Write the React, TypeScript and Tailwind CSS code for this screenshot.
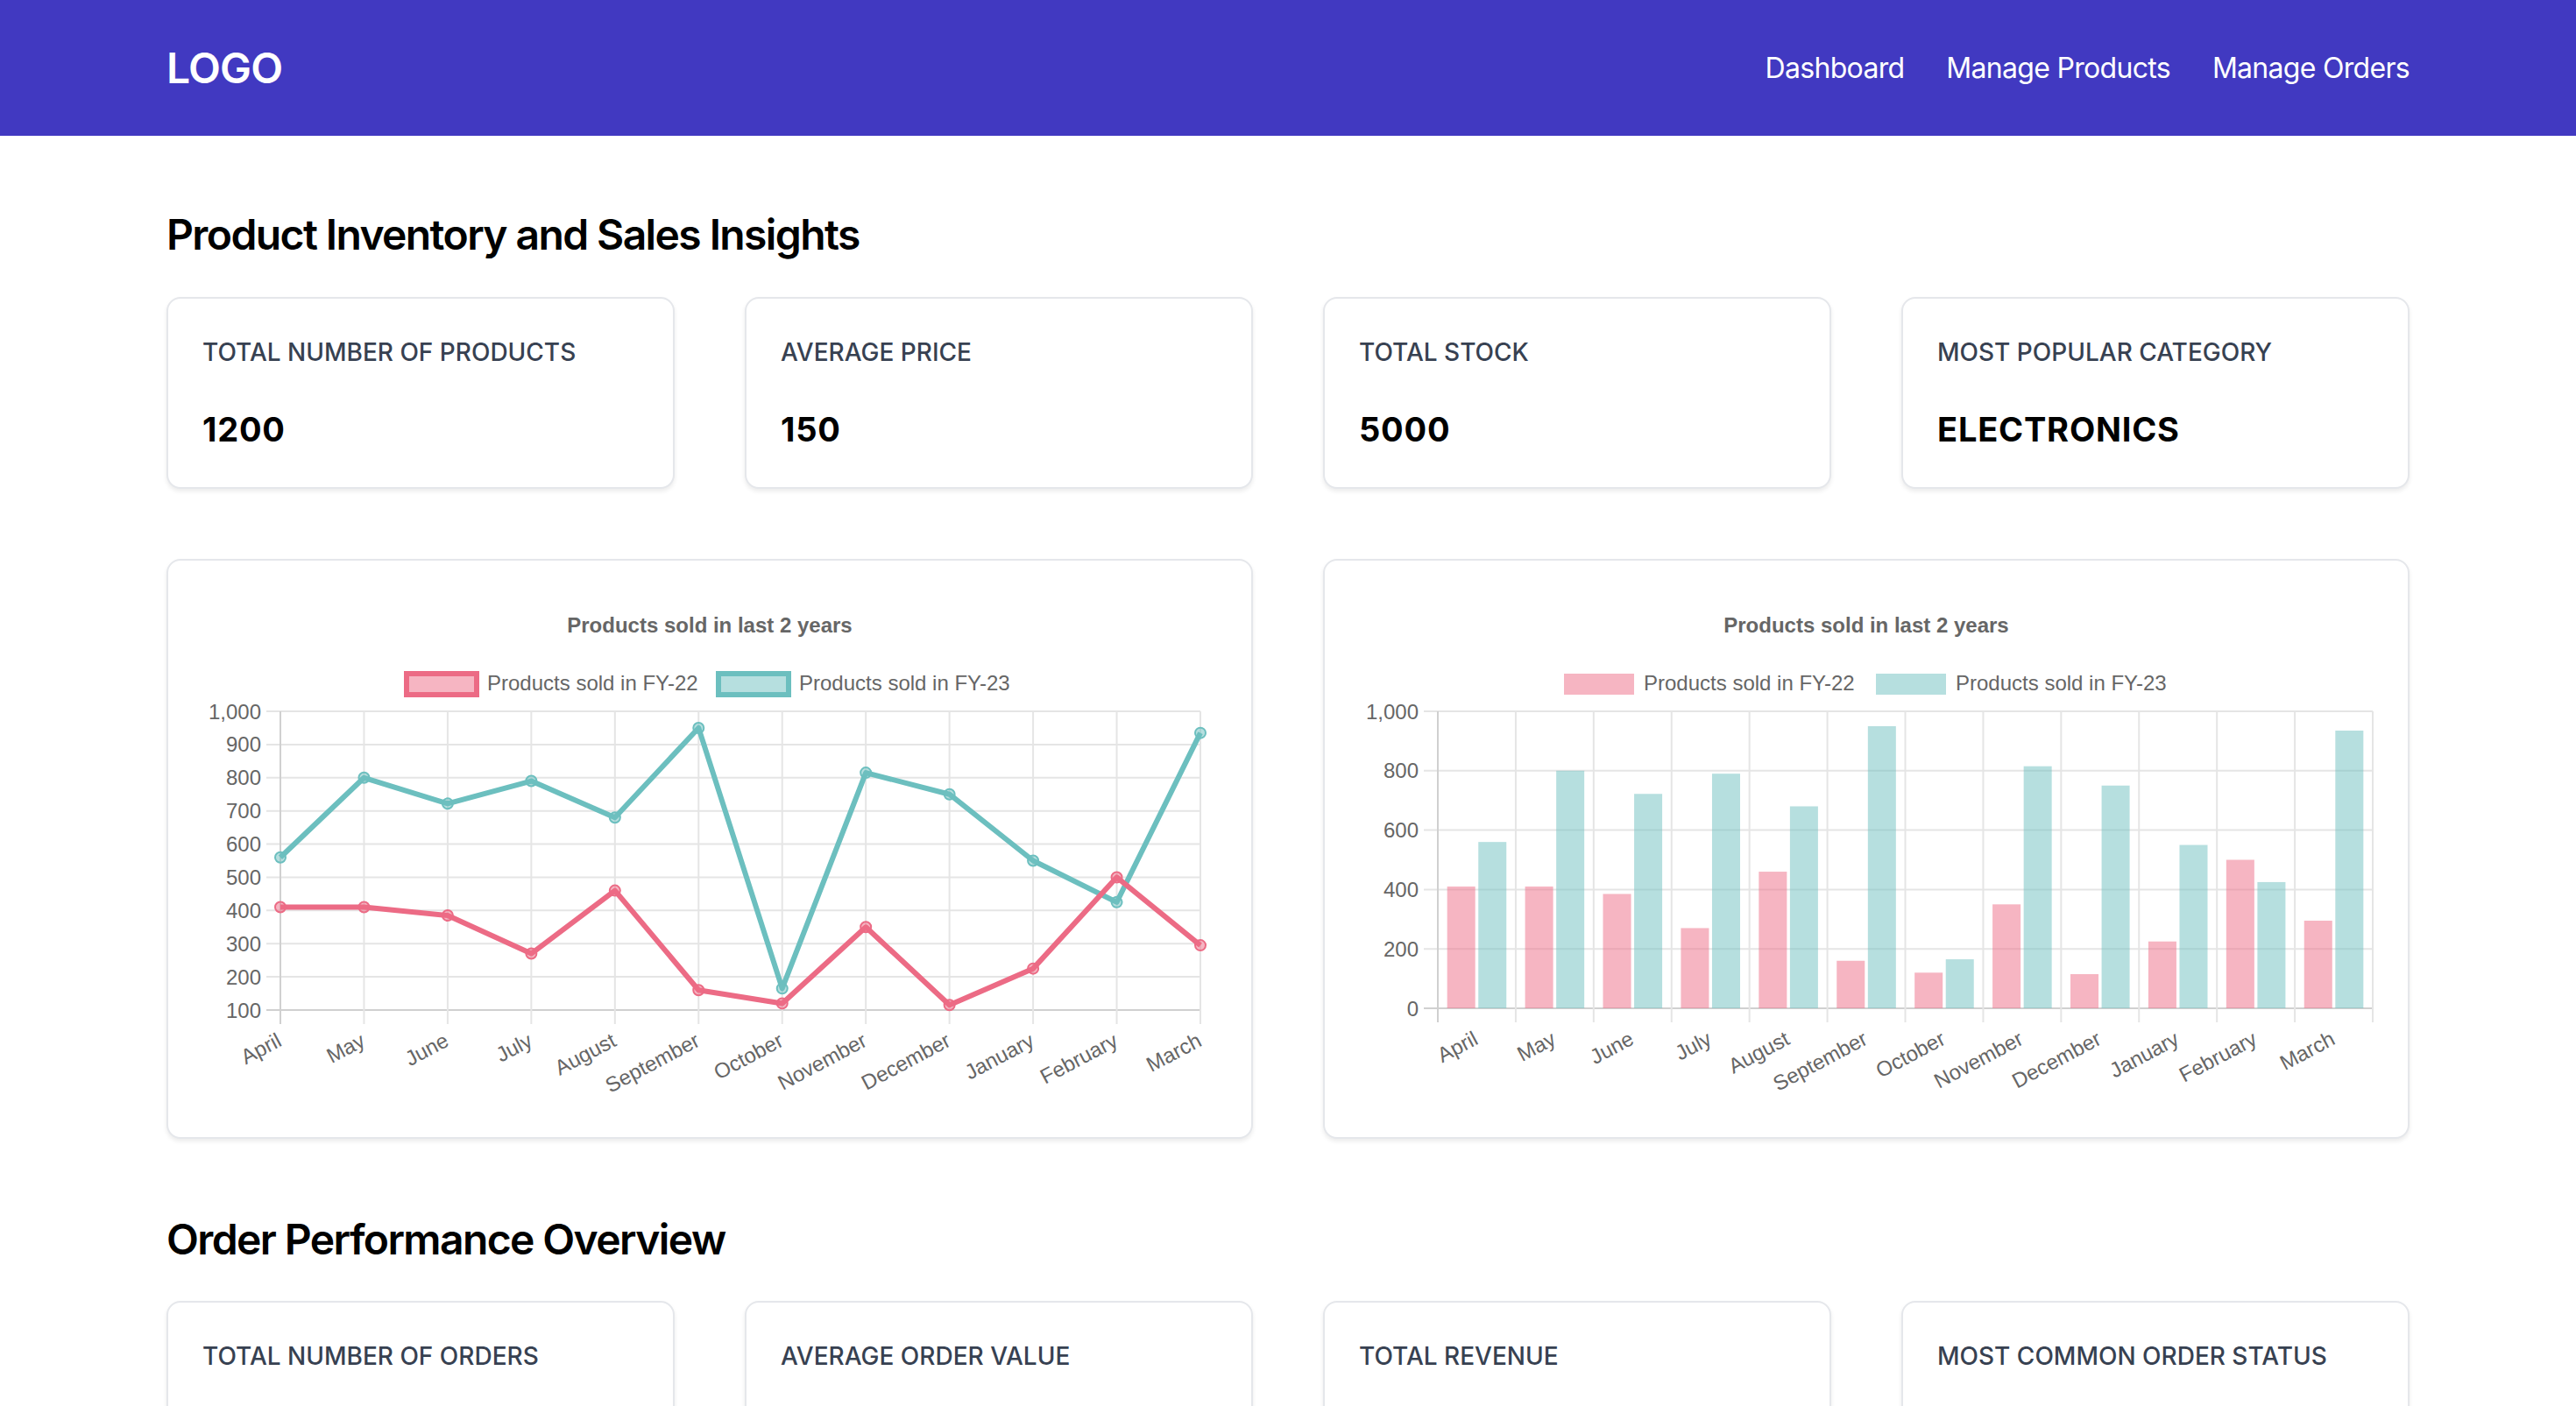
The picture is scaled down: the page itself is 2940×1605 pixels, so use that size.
import React from "react";

const months = ["April","May","June","July","August","September","October","November","December","January","February","March"];
const fy22 = [410, 410, 385, 270, 460, 160, 120, 350, 115, 225, 500, 295];
const fy23 = [560, 800, 722, 790, 680, 950, 165, 815, 750, 550, 425, 935];

const RED = "#ec6b85";
const TEAL = "#6cbfbf";
const RED_FILL = "rgba(237,107,133,0.5)";
const TEAL_FILL = "rgba(109,191,191,0.5)";
const GRID = "#e5e5e5";
const AXIS = "#d0d0d0";
const TXT = "#666666";
const FONT = "'Liberation Sans', Arial, Helvetica, sans-serif";
const ROT = 28;

function Legend({ bordered }: { bordered: boolean }) {
  return (
    <g fontFamily={FONT} fontSize={24} fill={TXT}>
      {bordered ? (
        <>
          <rect x={234} y={91} width={80} height={24} fill={RED_FILL} stroke={RED} strokeWidth={6} />
          <rect x={590} y={91} width={80} height={24} fill={TEAL_FILL} stroke={TEAL} strokeWidth={6} />
        </>
      ) : (
        <>
          <rect x={235} y={91} width={80} height={24} fill={RED_FILL} />
          <rect x={591} y={91} width={80} height={24} fill={TEAL_FILL} />
        </>
      )}
      <text x={326} y={110}>Products sold in FY-22</text>
      <text x={682} y={110}>Products sold in FY-23</text>
    </g>
  );
}

function Title() {
  return (
    <text x={580} y={44} textAnchor="middle" fontFamily={FONT} fontSize={24} fontWeight={700} fill={TXT}>
      Products sold in last 2 years
    </text>
  );
}

function LineChart() {
  const L = 90, R = 1140, T = 134, B = 475;
  const xs = (i: number) => L + (i * (R - L)) / 11;
  const ys = (v: number) => B - ((v - 100) * (B - T)) / 900;
  const ticks = [100, 200, 300, 400, 500, 600, 700, 800, 900, 1000];
  const pts = (d: number[]) => d.map((v, i) => `${xs(i)},${ys(v)}`).join(" ");
  return (
    <svg width={1160} height={582} className="block">
      <Title />
      <Legend bordered />
      {ticks.map((t) => (
        <g key={t}>
          <line x1={L - 16} x2={R} y1={ys(t)} y2={ys(t)} stroke={t === 100 ? AXIS : GRID} strokeWidth={2} />
          <text x={68} y={ys(t) + 8.5} textAnchor="end" fontFamily={FONT} fontSize={24} fill={TXT}>
            {t === 1000 ? "1,000" : t}
          </text>
        </g>
      ))}
      {months.map((m, i) => (
        <g key={m}>
          <line x1={xs(i)} x2={xs(i)} y1={T} y2={B + 16} stroke={i === 0 ? AXIS : GRID} strokeWidth={2} />
          <text
            x={xs(i) + 3}
            y={B + 40}
            textAnchor="end"
            fontFamily={FONT}
            fontSize={24}
            fill={TXT}
            transform={`rotate(-${ROT} ${xs(i) + 3} ${B + 40})`}
          >
            {m}
          </text>
        </g>
      ))}
      <polyline points={pts(fy23)} fill="none" stroke={TEAL} strokeWidth={6} strokeLinejoin="round" />
      {fy23.map((v, i) => (
        <circle key={i} cx={xs(i)} cy={ys(v)} r={6} fill={TEAL_FILL} stroke={TEAL} strokeWidth={2} />
      ))}
      <polyline points={pts(fy22)} fill="none" stroke={RED} strokeWidth={6} strokeLinejoin="round" />
      {fy22.map((v, i) => (
        <circle key={i} cx={xs(i)} cy={ys(v)} r={6} fill={RED_FILL} stroke={RED} strokeWidth={2} />
      ))}
    </svg>
  );
}

function BarChart() {
  const L = 91, R = 1158, T = 134, B = 473;
  const cw = (R - L) / 12;
  const ys = (v: number) => B - (v * (B - T)) / 1000;
  const ticks = [0, 200, 400, 600, 800, 1000];
  const slot = (cw * 0.8) / 2;
  const bw = slot * 0.9;
  return (
    <svg width={1160} height={582} className="block">
      <Title />
      <Legend bordered={false} />
      {ticks.map((t) => (
        <g key={t}>
          <line x1={L - 16} x2={R} y1={ys(t)} y2={ys(t)} stroke={t === 0 ? AXIS : GRID} strokeWidth={2} />
          <text x={69} y={ys(t) + 8.5} textAnchor="end" fontFamily={FONT} fontSize={24} fill={TXT}>
            {t === 1000 ? "1,000" : t}
          </text>
        </g>
      ))}
      {Array.from({ length: 13 }).map((_, i) => (
        <line key={i} x1={L + i * cw} x2={L + i * cw} y1={T} y2={B + 16} stroke={i === 0 ? AXIS : GRID} strokeWidth={2} />
      ))}
      {months.map((m, i) => {
        const c = L + i * cw + cw / 2;
        return (
          <g key={m}>
            <rect x={c - slot + (slot - bw) / 2} y={ys(fy22[i])} width={bw} height={B - ys(fy22[i])} fill={RED_FILL} />
            <rect x={c + (slot - bw) / 2} y={ys(fy23[i])} width={bw} height={B - ys(fy23[i])} fill={TEAL_FILL} />
            <text
              x={c + 3}
              y={B + 40}
              textAnchor="end"
              fontFamily={FONT}
              fontSize={24}
              fill={TXT}
              transform={`rotate(-${ROT} ${c + 3} ${B + 40})`}
            >
              {m}
            </text>
          </g>
        );
      })}
    </svg>
  );
}

function StatCard({ label, value }: { label: string; value: string }) {
  return (
    <div className="rounded-[16px] border-2 border-[#e5e7eb] bg-white p-[38px] shadow-[0_3px_5px_rgba(0,0,0,0.08)]">
      <div className="mt-[3px] pl-[1px] text-[28px] leading-[40px] font-medium uppercase text-[#374151]">{label}</div>
      <div className="mt-[40px] pl-[1px] text-[38px] leading-[56px] font-bold tracking-[0.8px] text-black">{value}</div>
    </div>
  );
}

export default function App() {
  return (
    <div className="min-h-screen bg-white" style={{ fontFamily: "Inter, 'Noto Sans', sans-serif" }}>
      <header className="h-[155px] bg-[#4139c1]">
        <div className="mx-auto flex h-full max-w-[2560px] items-center justify-between">
          <div className="text-[48px] font-semibold tracking-[-0.8px] text-white">LOGO</div>
          <nav className="flex items-center gap-[48px] text-[32px] tracking-[-0.7px] text-white">
            <a>Dashboard</a>
            <a>Manage Products</a>
            <a>Manage Orders</a>
          </nav>
        </div>
      </header>
      <main className="mx-auto max-w-[2560px] pt-[81px] pb-[80px]">
        <h1 className="text-[48px] leading-[64px] font-semibold tracking-[-1.6px] text-black">Product Inventory and Sales Insights</h1>
        <div className="mt-[39px] grid grid-cols-4 gap-[80px]">
          <StatCard label="Total Number of Products" value="1200" />
          <StatCard label="Average Price" value="150" />
          <StatCard label="Total Stock" value="5000" />
          <StatCard label="Most Popular Category" value="ELECTRONICS" />
        </div>
        <div className="mt-[80px] grid grid-cols-2 gap-[80px]">
          <div className="h-[662px] rounded-[16px] border-2 border-[#e5e7eb] bg-white p-[38px] shadow-[0_3px_5px_rgba(0,0,0,0.08)]">
            <LineChart />
          </div>
          <div className="h-[662px] rounded-[16px] border-2 border-[#e5e7eb] bg-white p-[38px] shadow-[0_3px_5px_rgba(0,0,0,0.08)]">
            <BarChart />
          </div>
        </div>
        <h2 className="mt-[83px] text-[48px] leading-[64px] font-semibold tracking-[-1.6px] text-black">Order Performance Overview</h2>
        <div className="mt-[38px] grid grid-cols-4 gap-[80px]">
          <StatCard label="Total Number of Orders" value="850" />
          <StatCard label="Average Order Value" value="320" />
          <StatCard label="Total Revenue" value="272000" />
          <StatCard label="Most Common Order Status" value="DELIVERED" />
        </div>
      </main>
    </div>
  );
}
